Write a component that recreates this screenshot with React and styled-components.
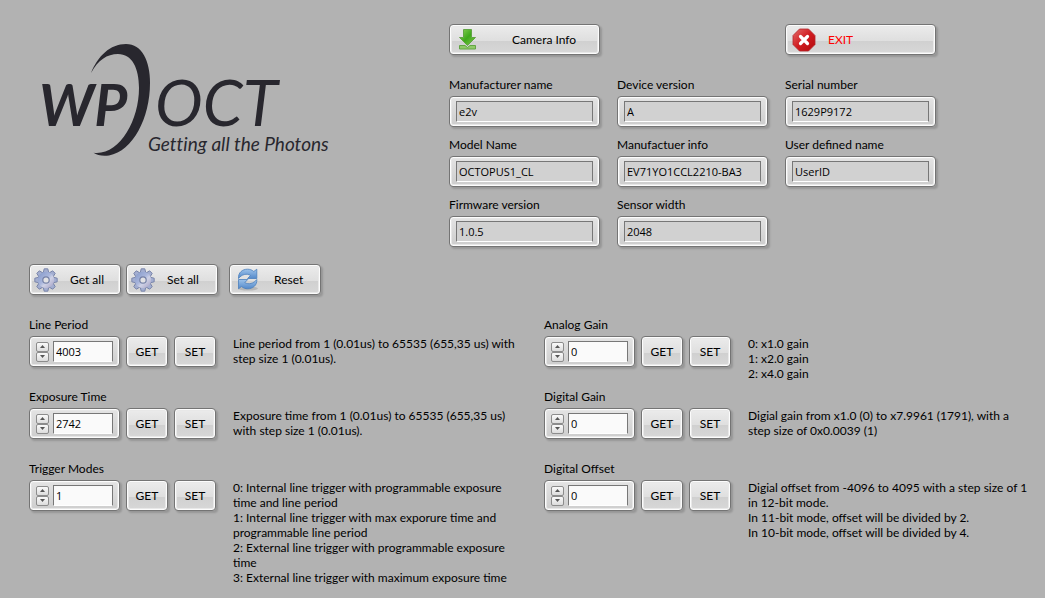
import React, { useState } from "react";
import styled, { createGlobalStyle } from "styled-components";

const GlobalStyle = createGlobalStyle`
  * { box-sizing: border-box; }
  body {
    margin: 0;
    background: #b2b2b2;
    color: #000;
    font-family: Lato, "Open Sans", sans-serif;
    font-size: 12px;
    line-height: 15px;
  }
  button, input { font: inherit; color: inherit; }
`;

const Page = styled.main`
  padding: 24px 0 12px 29px;
`;

const Header = styled.header`
  display: grid;
  grid-template-columns: 420fr 596fr;
`;

const LogoSvg = styled.svg`
  display: block;
  width: 300px;
  height: 124px;
  margin: 16px 0 0 7px;
  font-family: Lato, sans-serif;
  font-style: italic;
  font-variant-ligatures: none;
  fill: #28272e;
`;

const InfoPanel = styled.section`
  display: flex;
  flex-direction: column;
  gap: 22px;
`;

const InfoGrid = styled.div`
  display: grid;
  grid-template-columns: repeat(3, 150px);
  column-gap: 18px;
  row-gap: 10px;
`;

const Field = styled.div`
  grid-column: ${(p) => p.$column};
`;

const Label = styled.label`
  display: block;
  height: 19px;
  line-height: 16px;
  white-space: nowrap;
`;

const Bezel = styled.div`
  display: flex;
  align-items: center;
  width: ${(p) => p.$width};
  height: 31px;
  padding: 4px 6px;
  border: 1px solid #747474;
  border-radius: 4px;
  background: linear-gradient(#e4e4e4, #cdcdcd);
  box-shadow: inset 0 0 0 1px #fdfdfd, inset 0 0 0 2px #e6e6e6, 2px 2px 2px rgba(0, 0, 0, 0.16);
`;

const TextBox = styled.input`
  flex: 1;
  min-width: 0;
  height: 21px;
  padding: 0 2px;
  border: 1px solid;
  border-color: #777 #777 #fff #777;
  border-radius: 0;
  background: ${(p) => (p.readOnly ? "#d1d1d1" : "#fafafa")};
  font-family: "Open Sans", "Noto Sans", sans-serif;
  font-size: 11px;
  outline: none;
`;

const Button = styled.button`
  display: flex;
  align-items: center;
  justify-content: ${(p) => (p.$inset ? "flex-start" : "center")};
  gap: ${(p) => p.$gap || "0"};
  width: ${(p) => p.$width};
  height: 31px;
  padding: 0 ${(p) => p.$inset || "0"};
  border: 1px solid #747474;
  border-radius: 4px;
  color: ${(p) => p.$color || "#000"};
  background: linear-gradient(#ececec, #dfdfdf 54%, #d0d0d0 55%, #d8d8d8);
  box-shadow: inset 0 0 0 1px #fcfcfc, inset 0 0 0 2px #e8e8e8, 2px 2px 2px rgba(0, 0, 0, 0.16);
  white-space: nowrap;
  cursor: pointer;

  svg { flex: none; }
`;

const Toolbar = styled.nav`
  display: flex;
  gap: 5px;
  margin-top: 17px;

  > :last-child { margin-left: 6px; }
`;

const Settings = styled.section`
  display: grid;
  grid-template-columns: 515fr 501fr;
  margin-top: 22px;
`;

const SettingsColumn = styled.div`
  display: flex;
  flex-direction: column;
`;

const Setting = styled.div`
  min-height: 72px;
`;

const Controls = styled.div`
  display: flex;
  align-items: flex-start;
  gap: 6px;
`;

const Spinner = styled.div`
  display: flex;
  flex-direction: column;
  margin: 0 4px 0 0;
`;

const SpinButton = styled.button`
  display: flex;
  align-items: center;
  justify-content: center;
  width: 13px;
  height: 10px;
  padding: 0;
  border: 1px solid #8c8c8c;
  border-radius: 2px;
  background: linear-gradient(#fafafa, #dcdcdc);
`;

const Description = styled.p`
  margin: 0 0 0 11px;
  white-space: pre;
`;

function Logo() {
  return (
    <LogoSvg viewBox="36 40 300 124" role="img" aria-label="WP OCT">
      <text x="39" y="126" fontSize="57" fontWeight="700">WP</text>
      <path d="M91 73C98 56 110 44 126 44C142 44 150 61 150 83C150 118 133 151 109 155.500C103 156.300 97 155.500 93.500 152.800C119 156 139 121 139 88C139 68 132 54 118 54C107 54 98 60 91 73Z" />
      <text x="155" y="126" fontSize="64">OCT</text>
      <text x="148" y="151" fontSize="19">Getting all the Photons</text>
    </LogoSvg>
  );
}

function DownloadIcon() {
  return (
    <svg width="22" height="24" viewBox="0 0 22 24" aria-hidden="true">
      <defs>
        <linearGradient id="green" x1="0" y1="0" x2="1" y2="1">
          <stop offset="0" stopColor="#8ed35a" />
          <stop offset="0.5" stopColor="#3fa91c" />
          <stop offset="1" stopColor="#86c94f" />
        </linearGradient>
      </defs>
      <path d="M7.500 1.500h8v8h4L11.500 17.500 3.500 9.500h4z" fill="url(#green)" stroke="#62a545" />
      <path d="M3.500 17.500h5.500L11.500 19.500l2.500-2h5.500v3.500h-16z" fill="#8fca68" stroke="#62a545" />
    </svg>
  );
}

function ExitIcon() {
  return (
    <svg width="24" height="24" viewBox="0 0 24 24" aria-hidden="true">
      <defs>
        <linearGradient id="red" x1="0" y1="0" x2="1" y2="1">
          <stop offset="0" stopColor="#e46a6a" />
          <stop offset="0.5" stopColor="#d01c20" />
          <stop offset="1" stopColor="#b40a0e" />
        </linearGradient>
      </defs>
      <path d="M7.500 1h9L23 7.500v9L16.500 23h-9L1 16.500v-9z" fill="url(#red)" stroke="#b3272b" strokeWidth="0.800" />
      <path d="M8.500 8.500l7 7M15.500 8.500l-7 7" stroke="#fff" strokeWidth="3.200" strokeLinecap="round" />
    </svg>
  );
}

function GearIcon() {
  const teeth = [0, 45, 90, 135, 180, 225, 270, 315];
  return (
    <svg width="24" height="24" viewBox="0 0 24 24" aria-hidden="true">
      <defs>
        <linearGradient id="steel" x1="0" y1="0" x2="1" y2="1">
          <stop offset="0" stopColor="#8297c8" />
          <stop offset="0.450" stopColor="#a9b6dc" />
          <stop offset="0.600" stopColor="#cfd2e6" />
          <stop offset="1" stopColor="#a29cc0" />
        </linearGradient>
      </defs>
      <g fill="#a3aed0" stroke="#7480a6" strokeWidth="0.900" strokeLinejoin="round">
        {teeth.map((angle) => (
          <path key={angle} d="M9 5.500L10.200 0.800h3.600L15 5.500z" transform={`rotate(${angle} 12 12)`} />
        ))}
      </g>
      <circle cx="12" cy="12" r="8.200" fill="url(#steel)" />
      <circle cx="12" cy="12" r="3.200" fill="#e2e2e4" stroke="#7480a6" strokeWidth="1.200" />
    </svg>
  );
}

function ResetIcon() {
  return (
    <svg width="24" height="24" viewBox="0 0 24 24" aria-hidden="true">
      <defs>
        <linearGradient id="blue" x1="0" y1="0" x2="0" y2="1">
          <stop offset="0" stopColor="#9cc2ea" />
          <stop offset="1" stopColor="#5489ca" />
        </linearGradient>
      </defs>
      <ellipse cx="12" cy="20.500" rx="10" ry="2" fill="#9a9a9a" opacity="0.500" />
      <g fill="url(#blue)" stroke="#4a7fbd" strokeWidth="0.800" strokeLinejoin="round">
        <path d="M2.500 10.500C2 4.500 6.500 1.200 11.500 1.200C14 1.200 16 2 17.800 3.500L20.800 1.200v9.300h-9.300l3-3C11 5 5.500 6.500 2.500 10.500Z" />
        <path d="M20.800 11.500C21.300 17.500 16.500 20.800 11.800 20.800C9.300 20.800 7.300 20 5.500 18.500L2.500 20.800V11.500h9.300l-3 3C12.300 17 17.800 15.500 20.800 11.500Z" />
      </g>
    </svg>
  );
}

function Arrow({ up }) {
  return (
    <svg width="5" height="3" viewBox="0 0 5 3" aria-hidden="true">
      <path d={up ? "M0 3L2.500 0L5 3z" : "M0 0L2.500 3L5 0z"} fill="#555" />
    </svg>
  );
}

const info = [
  { id: "manufacturer", label: "Manufacturer name", value: "e2v", column: 1 },
  { id: "device", label: "Device version", value: "A", column: 2 },
  { id: "serial", label: "Serial number", value: "1629P9172", column: 3 },
  { id: "model", label: "Model Name", value: "OCTOPUS1_CL", column: 1 },
  { id: "maninfo", label: "Manufactuer info", value: "EV71YO1CCL2210-BA3", column: 2 },
  { id: "user", label: "User defined name", value: "UserID", column: 3 },
  { id: "firmware", label: "Firmware version", value: "1.0.5", column: 1 },
  { id: "sensor", label: "Sensor width", value: "2048", column: 2 },
];

const timing = [
  {
    id: "period",
    label: "Line Period",
    value: 4003,
    text: "Line period from 1 (0.01us) to 65535 (655,35 us) with\nstep size 1 (0.01us).",
  },
  {
    id: "exposure",
    label: "Exposure Time",
    value: 2742,
    text: "Exposure time from 1 (0.01us) to 65535 (655,35 us)\nwith step size 1 (0.01us).",
  },
  {
    id: "trigger",
    label: "Trigger Modes",
    value: 1,
    text:
      "0: Internal line trigger with programmable exposure\ntime and line period\n1: Internal line trigger with max exporure time and\nprogrammable line period\n2: External line trigger with programmable exposure\ntime\n3: External line trigger with maximum exposure time",
  },
];

const gains = [
  { id: "analog", label: "Analog Gain", value: 0, text: "0: x1.0 gain\n1: x2.0 gain\n2: x4.0 gain" },
  {
    id: "digital",
    label: "Digital Gain",
    value: 0,
    text: "Digial gain from x1.0 (0) to x7.9961 (1791), with a\nstep size of 0x0.0039 (1)",
  },
  {
    id: "offset",
    label: "Digital Offset",
    value: 0,
    text:
      "Digial offset from -4096 to 4095 with a step size of 1\nin 12-bit mode.\nIn 11-bit mode, offset will be divided by 2.\nIn 10-bit mode, offset will be divided by 4.",
  },
];

function SettingRow({ id, label, value, text }) {
  const [current, setCurrent] = useState(value);
  return (
    <Setting>
      <Label htmlFor={id}>{label}</Label>
      <Controls>
        <Bezel $width="91px">
          <Spinner>
            <SpinButton aria-label={`Increase ${label}`} onClick={() => setCurrent(Number(current) + 1)}>
              <Arrow up />
            </SpinButton>
            <SpinButton aria-label={`Decrease ${label}`} onClick={() => setCurrent(Number(current) - 1)}>
              <Arrow />
            </SpinButton>
          </Spinner>
          <TextBox id={id} value={current} onChange={(e) => setCurrent(e.target.value)} />
        </Bezel>
        <Button $width="42px">GET</Button>
        <Button $width="42px">SET</Button>
        <Description>{text}</Description>
      </Controls>
    </Setting>
  );
}

export default function App() {
  return (
    <>
      <GlobalStyle />
      <Page>
        <Header>
          <Logo />
          <InfoPanel>
            <InfoGrid>
              <Button $inset="6px" $width="151px" $gap="34px"><DownloadIcon />Camera Info</Button>
              <Field $column={3}>
                <Button $inset="6px" $width="151px" $gap="12px" $color="#f00"><ExitIcon />EXIT</Button>
              </Field>
            </InfoGrid>
            <InfoGrid>
              {info.map((item) => (
                <Field key={item.id} $column={item.column}>
                  <Label htmlFor={item.id}>{item.label}</Label>
                  <Bezel $width="151px">
                    <TextBox id={item.id} value={item.value} readOnly />
                  </Bezel>
                </Field>
              ))}
            </InfoGrid>
          </InfoPanel>
        </Header>
        <Toolbar>
          <Button $inset="4px" $width="92px" $gap="12px"><GearIcon />Get all</Button>
          <Button $inset="4px" $width="92px" $gap="12px"><GearIcon />Set all</Button>
          <Button $inset="6px" $width="92px" $gap="14px"><ResetIcon />Reset</Button>
        </Toolbar>
        <Settings>
          <SettingsColumn>{timing.map((s) => <SettingRow key={s.id} {...s} />)}</SettingsColumn>
          <SettingsColumn>{gains.map((s) => <SettingRow key={s.id} {...s} />)}</SettingsColumn>
        </Settings>
      </Page>
    </>
  );
}
